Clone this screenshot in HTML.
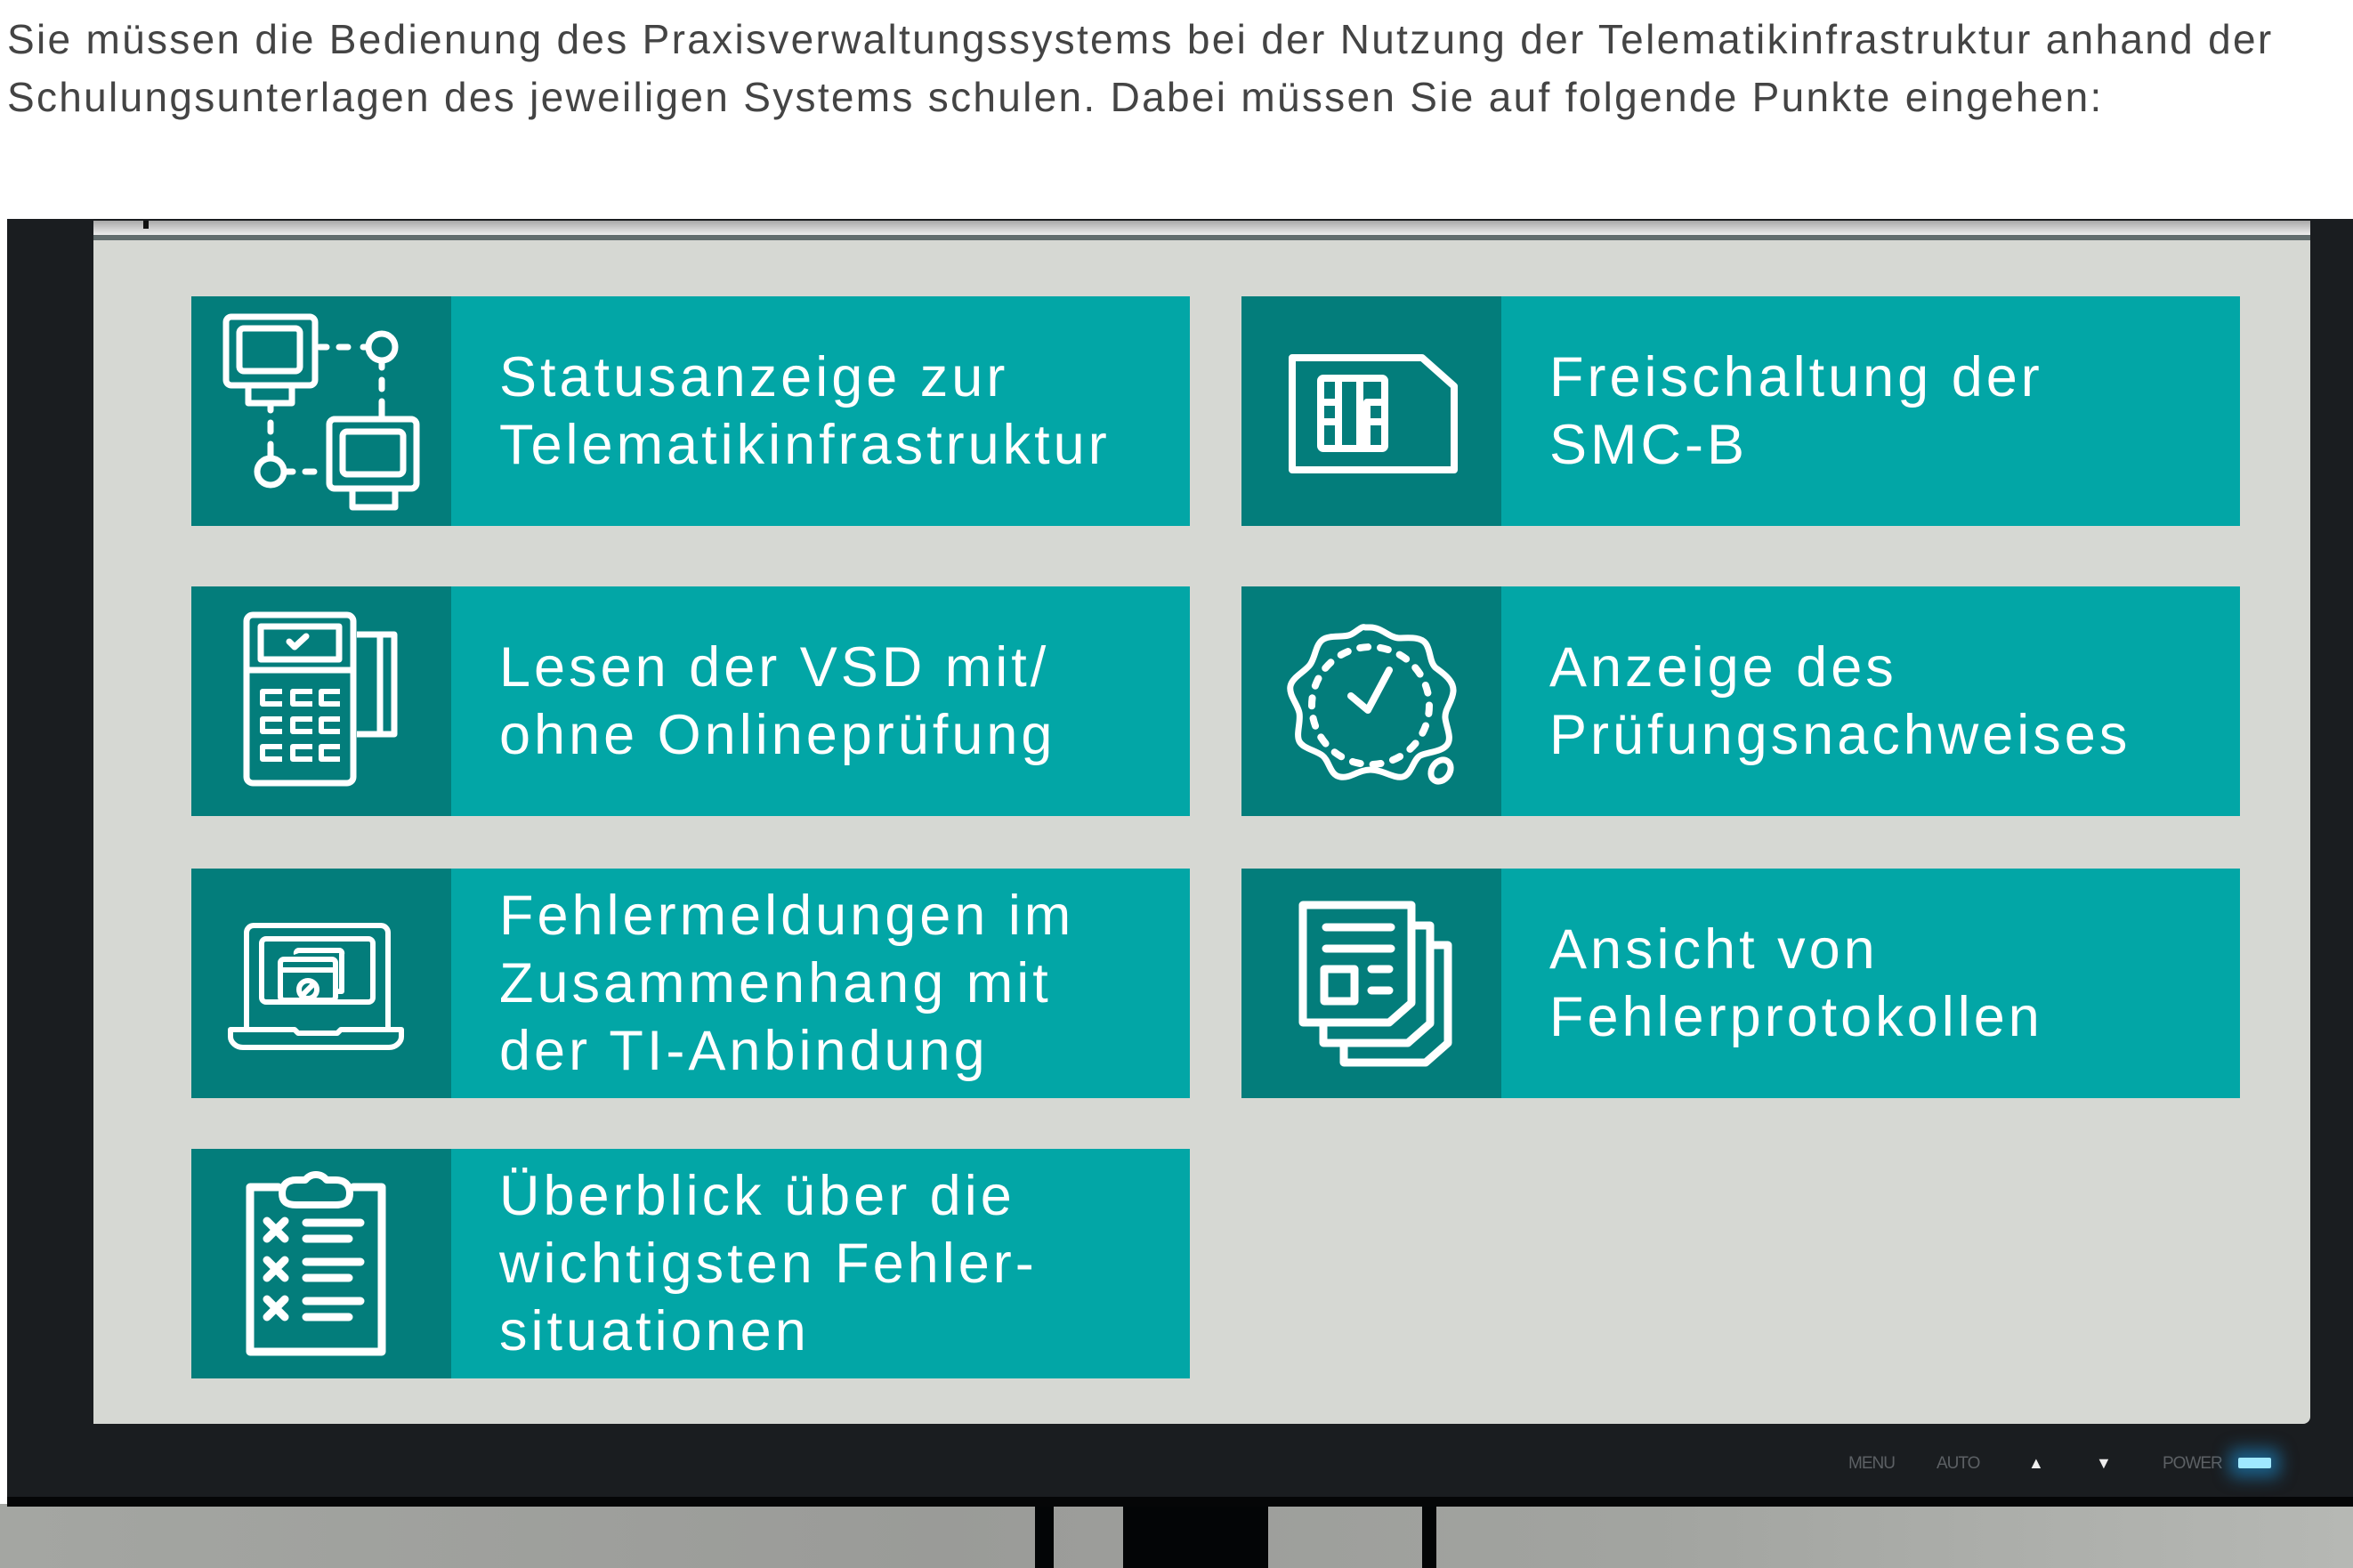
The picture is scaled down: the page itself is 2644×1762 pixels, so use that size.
<!DOCTYPE html>
<html><head><meta charset="utf-8"><style>
*{margin:0;padding:0;box-sizing:border-box}
html,body{width:2644px;height:1762px;overflow:hidden;background:#fff;position:relative;font-family:"Liberation Sans",sans-serif}
.intro{position:absolute;left:8px;top:12px;color:#444;font-size:46px;line-height:65px;white-space:nowrap;letter-spacing:2.3px}
.wall{position:absolute;left:0;top:1690px;width:2644px;height:72px;background:linear-gradient(90deg,#a4a6a2,#9a9b98 40%,#a2a4a0 70%,#b6b8b4)}
.frame{position:absolute;left:8px;top:246px;width:2640px;height:1447px;background:#1a1d20;border-bottom:11px solid #050607}
.strip{position:absolute;left:105px;top:248px;width:2491px;height:17px;background:linear-gradient(#a8a8a8,#f2f2f2)}
.bar{position:absolute;left:105px;top:264px;width:2491px;height:6px;background:#626d6e}
.screen{position:absolute;left:105px;top:270px;width:2491px;height:1330px;background:#d6d8d3;border-radius:0 0 8px 0}
.card{position:absolute;width:1122px;height:258px;background:#02a6a6;display:flex}
.card .ic{width:292px;height:258px;background:#037d7b;flex:none}
.card .tx{padding-left:54px;display:flex;align-items:center;color:#fff;font-size:63px;line-height:76px;letter-spacing:4px;white-space:nowrap}
svg{display:block}
.btn{position:absolute;top:1634px;color:#5c6064;font-size:19px;letter-spacing:-1px}
.leg{position:absolute;background:#030506}
</style></head><body>
<div class="intro"><div>Sie müssen die Bedienung des Praxisverwaltungssystems bei der Nutzung der Telematikinfrastruktur anhand der</div><div>Schulungsunterlagen des jeweiligen Systems schulen. Dabei müssen Sie auf folgende Punkte eingehen:</div></div>

<div class="wall"></div>
<div class="leg" style="left:1163px;top:1690px;width:21px;height:72px"></div>
<div class="leg" style="left:1262px;top:1690px;width:163px;height:72px"></div>
<div class="leg" style="left:1598px;top:1690px;width:16px;height:72px"></div>
<div class="frame"></div>
<div class="strip"></div>
<div style="position:absolute;left:161px;top:248px;width:6px;height:9px;background:#111"></div>
<div class="bar"></div>
<div class="screen"></div>

<div class="btn" style="left:2077px">MENU</div>
<div class="btn" style="left:2176px">AUTO</div>
<div class="btn" style="left:2279px;color:#eee;font-size:18px">▲</div>
<div class="btn" style="left:2355px;color:#eee;font-size:18px">▼</div>
<div class="btn" style="left:2430px">POWER</div>
<div style="position:absolute;left:2515px;top:1638px;width:37px;height:12px;background:#9fe8ff;box-shadow:0 0 18px 10px rgba(30,150,220,.55);border-radius:2px"></div>

<div class="card" style="left:215px;top:333px"><div class="ic">
<svg width="292" height="258" viewBox="0 0 292 258" fill="none" stroke="#fff" stroke-width="7" stroke-linecap="round" stroke-linejoin="round">
<rect x="39" y="23" width="100" height="77" rx="6"/><rect x="54" y="36" width="68" height="48" rx="5"/>
<path d="M64 100v20h49v-20"/>
<path d="M144 57h8M166 57h10" /><circle cx="214" cy="57" r="15"/><path d="M193 57h5"/>
<path d="M214 72v8M214 94v10M214 118v20"/>
<rect x="155" y="138" width="98" height="78" rx="6"/><rect x="170" y="152" width="68" height="48" rx="5"/>
<path d="M181 216v21h48v-21"/>
<path d="M89 120v8M89 142v10M89 166v15"/><circle cx="89" cy="197" r="15"/><path d="M104 197h10M128 197h10"/>
</svg></div><div class="tx">Statusanzeige zur<br>Telematikinfrastruktur</div></div>

<div class="card" style="left:1395px;top:333px"><div class="ic">
<svg width="292" height="258" viewBox="0 0 292 258" fill="none" stroke="#fff" stroke-width="8" stroke-linejoin="round">
<path d="M57 69h146l36 32v94H57z"/>
<rect x="89" y="92" width="72" height="79" rx="3"/>
<path d="M109 92v79M133 92v79M89 119h20M89 141h20M141 171v-52h20M141 141h20"/>
</svg></div><div class="tx">Freischaltung der<br>SMC-B</div></div>

<div class="card" style="left:215px;top:659px"><div class="ic">
<svg width="292" height="258" viewBox="0 0 292 258" fill="none" stroke="#fff" stroke-width="7" stroke-linejoin="round">
<rect x="62" y="32" width="120" height="189" rx="7"/>
<rect x="78" y="45" width="88" height="37"/>
<path d="M110 62l6 6 13-12" stroke-linecap="round"/>
<path d="M62 94h123"/>
<path d="M102 118H80v14h22M136 118h-22v14h22M167 118h-21v14h21M102 149H80v14h22M136 149h-22v14h22M167 149h-21v14h21M102 180H80v14h22M136 180h-22v14h22M167 180h-21v14h21" stroke-width="6"/>
<path d="M186 54h42v112h-42M212 54v112"/>
</svg></div><div class="tx">Lesen der VSD mit/<br>ohne Onlineprüfung</div></div>

<div class="card" style="left:1395px;top:659px"><div class="ic">
<svg width="292" height="258" viewBox="0 0 292 258" fill="none" stroke="#fff" stroke-width="7" stroke-linecap="round" stroke-linejoin="round">
<path d="M145 46c12 0 22 12 32 12s24-2 30 6 4 22 12 28 20 14 19 26-10 20-9 30 8 22 2 30-22 8-30 12-10 22-20 24-22-8-36-8-22 10-34 8-12-18-20-24-22-8-26-16 2-22 0-32-12-20-10-30 16-16 22-24 6-22 14-28 24-2 32-6 12-10 16-8z"/>
<circle cx="145" cy="134" r="66" stroke-width="8" stroke-dasharray="9 14"/>
<path d="M123 123l19 16 24-45" stroke-width="8"/>
<ellipse cx="224" cy="207" rx="10" ry="13" transform="rotate(35 224 207)"/>
</svg></div><div class="tx">Anzeige des<br>Prüfungsnachweises</div></div>

<div class="card" style="left:215px;top:976px"><div class="ic">
<svg width="292" height="258" viewBox="0 0 292 258" fill="none" stroke="#fff" stroke-width="6" stroke-linejoin="round">
<path d="M62 181V72a8 8 0 0 1 8-8h143a8 8 0 0 1 8 8v109"/>
<rect x="79" y="79" width="125" height="71" rx="5"/>
<path d="M44 181h72l4 4h44l4-4h68v8c0 6-6 12-14 12H58c-8 0-14-6-14-12z"/>
<path d="M118 96a3 3 0 0 1 3-4h45a3 3 0 0 1 3 4v42h-9"/>
<rect x="100" y="102" width="62" height="46" rx="4"/><path d="M100 114h62"/>
<circle cx="131" cy="136" r="10"/><path d="M124 143l14-14"/>
</svg></div><div class="tx">Fehlermeldungen im<br>Zusammenhang mit<br>der TI-Anbindung</div></div>

<div class="card" style="left:1395px;top:976px"><div class="ic">
<svg width="292" height="258" viewBox="0 0 292 258" fill="none" stroke="#fff" stroke-width="9" stroke-linejoin="round">
<path d="M69 41h122v110l-25 22H69z"/>
<path d="M191 64h21v110l-25 22H92v-23"/>
<path d="M212 86h20v110l-25 22H115v-22"/>
<path d="M95 66h73M95 90h73M146 113h20M146 137h20" stroke-linecap="round"/>
<rect x="93" y="113" width="34" height="36"/>
</svg></div><div class="tx">Ansicht von<br>Fehlerprotokollen</div></div>

<div class="card" style="left:215px;top:1291px"><div class="ic">
<svg width="292" height="258" viewBox="0 0 292 258" fill="none" stroke="#fff" stroke-width="9" stroke-linejoin="round" stroke-linecap="round">
<path d="M98 43H66v185h148V43h-32"/>
<path d="M102 50c0-10 6-15 16-15h10c4-5 8-6 12-6s8 1 12 6h10c10 0 16 5 16 15s-6 13-16 13h-44c-10 0-16-3-16-13z" stroke-width="8"/>
<path d="M85 81l20 20M105 81l-20 20M85 125l20 20M105 125l-20 20M85 169l20 20M105 169l-20 20"/>
<path d="M129 83h61M129 101h48M129 127h61M129 145h48M129 171h61M129 189h48"/>
</svg></div><div class="tx">Überblick über die<br>wichtigsten Fehler-<br>situationen</div></div>

</body></html>
